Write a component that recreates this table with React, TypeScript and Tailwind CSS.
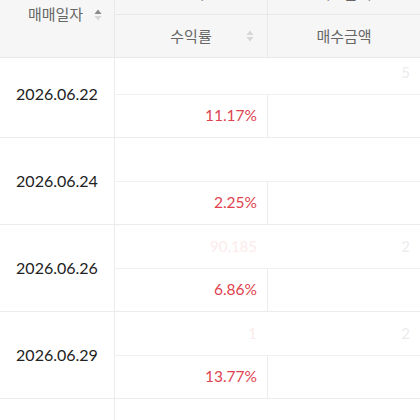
import React from "react";

interface Row {
  date: string;
  rate: string;
  ghostLeft?: string;
  ghostRight?: string;
}

const rows: Row[] = [
  { date: "2026.06.22", rate: "11.17%", ghostRight: "5" },
  { date: "2026.06.24", rate: "2.25%" },
  { date: "2026.06.26", rate: "6.86%", ghostLeft: "90,185", ghostRight: "2" },
  { date: "2026.06.29", rate: "13.77%", ghostLeft: "1", ghostRight: "2" },
  { date: "", rate: "" },
];

function SortIcon({ active }: { active?: boolean }) {
  return (
    <svg width="8" height="12" viewBox="0 0 8 12" className="shrink-0">
      <path d="M4 0.5 L7.5 5 L0.5 5 Z" fill={active ? "#8a8a8a" : "#d6d6d6"} />
      <path d="M4 11.5 L7.5 7 L0.5 7 Z" fill="#d6d6d6" />
    </svg>
  );
}

export default function App() {
  return (
    <div
      className="w-[420px] h-[420px] overflow-hidden bg-white"
      style={{ fontFamily: "Lato, 'Noto Sans CJK KR', sans-serif" }}
    >
      <div className="-mt-[28px]">
        {/* 헤더 */}
        <div className="relative z-10 grid grid-cols-[115px_153px_152px] grid-rows-[43px_43px] bg-[#f6f6f6] text-[15px] text-[#666]">
          <div className="row-span-2 flex items-center justify-center gap-[11px] border-r border-b border-[#e9e9e9] pl-[16px]">
            <span>매매일자</span>
            <SortIcon active />
          </div>
          <div className="flex items-center justify-center border-r border-b border-[#e9e9e9]">
            손익
          </div>
          <div className="flex items-center justify-center border-b border-[#e9e9e9]">
            매도금액
          </div>
          <div className="relative flex items-center justify-center border-r border-b border-[#e9e9e9]">
            <span>수익률</span>
            <span className="absolute right-[13px] top-[15px]">
              <SortIcon />
            </span>
          </div>
          <div className="flex items-center justify-center border-b border-[#e9e9e9]">
            매수금액
          </div>
        </div>

        {/* 본문 */}
        <div className="-mt-[7px]">
          {rows.map((row, i) => (
            <div
              key={i}
              className="grid grid-cols-[115px_153px_152px] grid-rows-[44px_43px]"
            >
              <div className="row-span-2 flex items-center justify-center border-r border-b border-[#ececec] text-[16px] text-[#222]">
                {row.date}
              </div>
              <div className="col-span-2 flex items-center justify-between border-b border-[#f0f0f0] text-[15px]">
                <span className="w-[142px] text-right text-[#fcecec]">
                  {row.ghostLeft}
                </span>
                <span className="pr-[10px] text-[#ececec]">{row.ghostRight}</span>
              </div>
              <div className="flex items-center justify-end border-r border-b border-[#ececec] pr-[10px] text-[15.5px] text-[#e0434f]">
                {row.rate}
              </div>
              <div className="border-b border-[#ececec]"></div>
            </div>
          ))}
        </div>
      </div>
    </div>
  );
}
